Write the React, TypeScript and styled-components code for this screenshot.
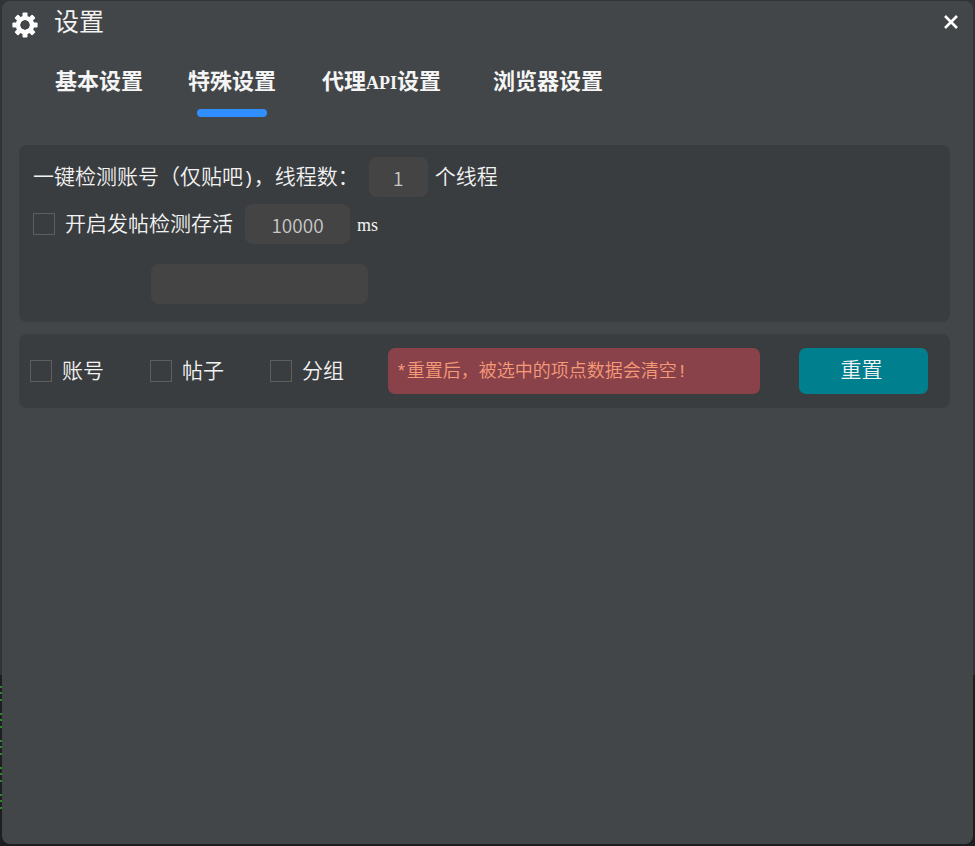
import React, { useState } from "react";
import styled, { createGlobalStyle, css } from "styled-components";

const cjk = `"Noto Sans CJK SC", sans-serif`;

const GlobalStyle = createGlobalStyle`
  *, *::before, *::after { box-sizing: border-box; }
  body {
    margin: 0;
    font-family: ${cjk};
    color: #f2f2f2;
    background: #26292b;
  }
  button, input { font-family: inherit; }
`;

const Desktop = styled.div`
  min-height: 100vh;
  display: flex;
  padding: 1px 2px 2px;
  background:
    repeating-linear-gradient(#2a8a2a 0 2px, transparent 2px 6px, #2a8a2a 6px 8px, transparent 8px 13px, #2a8a2a 13px 15px, transparent 15px 27px)
      0 686px / 2px 124px no-repeat,
    linear-gradient(#303436 0 675px, #1c1e1f 675px);
`;

const Dialog = styled.main`
  flex: 1;
  display: flex;
  flex-direction: column;
  background: #424648;
  border-radius: 8px;
`;

const Header = styled.header`
  display: flex;
  align-items: center;
  height: 44px;
  padding: 0 14px 2px 10px;
`;

const GearIcon = styled.svg`
  width: 26px;
  height: 26px;
  margin-top: 6px;
  fill: #ffffff;
`;

const Title = styled.h1`
  flex: 1;
  margin: 0 0 4px 16px;
  font-size: 25px;
  line-height: 36px;
  font-weight: 400;
`;

const CloseButton = styled.button`
  display: flex;
  padding: 0;
  border: 0;
  background: none;
  cursor: pointer;
  svg {
    width: 16px;
    height: 16px;
    stroke: #ffffff;
    stroke-width: 2.6;
    fill: none;
  }
`;

const Tabs = styled.nav`
  display: grid;
  grid-template-columns: 133px 134px 171px max-content;
  margin: 18px 0 28px 53px;
`;

const Tab = styled.button<{ $active: boolean }>`
  justify-self: start;
  display: flex;
  flex-direction: column;
  align-items: center;
  gap: 14px;
  padding: 0;
  border: 0;
  background: none;
  color: #f5f5f5;
  font-size: 22px;
  line-height: 32px;
  font-weight: 700;
  white-space: nowrap;
  cursor: pointer;
  &::after {
    content: "";
    width: 70px;
    height: 8px;
    border-radius: 4px;
    background: ${(p) => (p.$active ? "#2f8fff" : "transparent")};
  }
`;

const Latin = styled.span`
  font-family: "Liberation Serif", serif;
  font-size: 18px;
  line-height: 1;
`;

const Mono = styled.span`
  font-family: "Liberation Mono", monospace;
  font-size: 18px;
  line-height: 1;
`;

const panel = css`
  margin: 0 23px 12px 17px;
  border-radius: 8px;
  background: #3a3d3f;
`;

const OptionsPanel = styled.section`
  ${panel}
  display: flex;
  flex-direction: column;
  padding: 12px 14px 18px;
`;

const Row = styled.div<{ $gap?: number; $indent?: number }>`
  display: flex;
  align-items: center;
  height: 40px;
  margin-top: ${(p) => p.$gap ?? 0}px;
  padding-left: ${(p) => p.$indent ?? 0}px;
  font-size: 21px;
  line-height: 36px;
  font-weight: 350;
  white-space: nowrap;
`;

const Field = styled.input<{ $width: number }>`
  width: ${(p) => p.$width}px;
  height: 40px;
  padding: 0;
  border: 0;
  border-radius: 8px;
  background: #444444;
  color: #c8c8c8;
  font-size: 19px;
  font-weight: 350;
  text-align: center;
  outline: none;
`;

const Caption = styled.label<{ $space: number }>`
  margin-right: ${(p) => p.$space}px;
  padding-bottom: 4px;
`;

const Unit = styled.span`
  margin-left: 7px;
  padding-bottom: 4px;
`;

const CheckLabel = styled.label`
  display: flex;
  align-items: center;
  gap: 10px;
  font-size: 21px;
  line-height: 36px;
  font-weight: 350;
  white-space: nowrap;
`;

const Check = styled.input`
  appearance: none;
  width: 22px;
  height: 22px;
  margin: 0;
  border: 1px solid #5e5e5e;
  background: transparent;
  &:checked { background: #2f8fff; }
`;

const ResetPanel = styled.section`
  ${panel}
  display: flex;
  align-items: center;
  padding: 14px 22px 14px 11px;
`;

const Choices = styled.div`
  display: grid;
  grid-template-columns: repeat(3, 120px);
  margin-right: -2px;
`;

const Warning = styled.p`
  flex: 1;
  margin: 0 39px 0 0;
  padding: 0 8px 4px;
  height: 46px;
  border-radius: 7px;
  background: #8a424a;
  color: #f79a78;
  font-size: 18px;
  line-height: 42px;
  font-weight: 350;
  white-space: nowrap;
`;

const ResetButton = styled.button`
  width: 129px;
  height: 46px;
  padding: 0 4px 6px 0;
  border: 0;
  border-radius: 7px;
  background: #00808e;
  color: #f2f2f2;
  font-size: 21px;
  font-weight: 350;
  cursor: pointer;
`;

const tabs = [
  { id: "basic", label: "基本设置" },
  { id: "special", label: "特殊设置" },
  { id: "proxy", label: <span>代理<Latin>API</Latin>设置</span> },
  { id: "browser", label: "浏览器设置" },
];

const choices = ["账号", "帖子", "分组"];

function Gear() {
  return (
    <GearIcon viewBox="-13 -13 26 26" aria-hidden="true">
      {[0, 45, 90, 135].map((angle) => (
        <rect key={angle} x="-2.5" y="-12.6" width="5" height="25.2" rx="1" transform={`rotate(${angle})`} mask="url(#hub)" />
      ))}
      <mask id="hub" maskUnits="userSpaceOnUse" x="-13" y="-13" width="26" height="26">
        <rect x="-13" y="-13" width="26" height="26" fill="#fff" />
        <circle r="5" fill="#000" />
      </mask>
      <circle r="7.1" fill="none" stroke="#fff" strokeWidth="4.4" />
    </GearIcon>
  );
}

export default function App() {
  const [active, setActive] = useState("special");
  return (
    <Desktop>
      <GlobalStyle />
      <Dialog>
        <Header>
          <Gear />
          <Title>设置</Title>
          <CloseButton aria-label="关闭">
            <svg viewBox="0 0 16 16"><path d="M2 2l12 12M14 2l-12 12" /></svg>
          </CloseButton>
        </Header>
        <Tabs>
          {tabs.map((tab) => (
            <Tab key={tab.id} $active={active === tab.id} onClick={() => setActive(tab.id)}>
              {tab.label}
            </Tab>
          ))}
        </Tabs>
        <OptionsPanel>
          <Row>
            <Caption htmlFor="threads" $space={10}>一键检测账号（仅贴吧<Mono>)</Mono>，线程数：</Caption>
            <Field id="threads" $width={59} defaultValue="1" />
            <Unit>个线程</Unit>
          </Row>
          <Row $gap={7}>
            <CheckLabel>
              <Check type="checkbox" />
              <Caption as="span" $space={12}>开启发帖检测存活</Caption>
            </CheckLabel>
            <Field $width={105} defaultValue="10000" aria-label="检测间隔" />
            <Unit><Latin>ms</Latin></Unit>
          </Row>
          <Row $gap={20} $indent={118}>
            <Field $width={217} aria-label="内容" />
          </Row>
        </OptionsPanel>
        <ResetPanel>
          <Choices>
            {choices.map((name) => (
              <CheckLabel key={name}>
                <Check type="checkbox" />
                <Caption as="span" $space={0}>{name}</Caption>
              </CheckLabel>
            ))}
          </Choices>
          <Warning><Mono>*</Mono>重置后，被选中的项点数据会清空<Mono>!</Mono></Warning>
          <ResetButton>重置</ResetButton>
        </ResetPanel>
      </Dialog>
    </Desktop>
  );
}
